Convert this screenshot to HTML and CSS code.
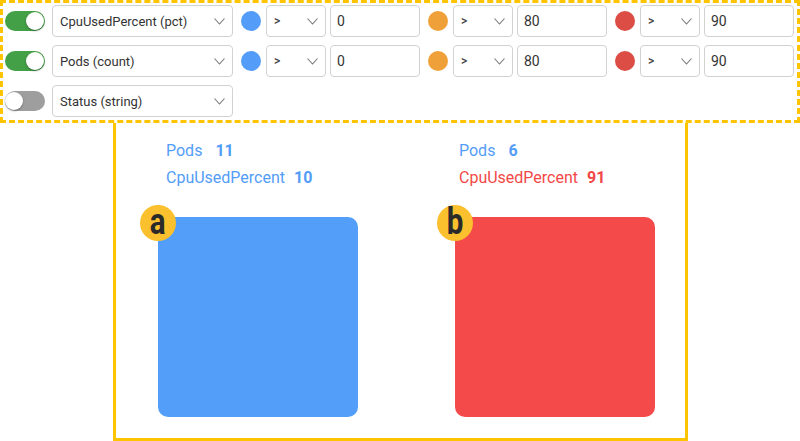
FILE: index.html
```html
<!DOCTYPE html>
<html>
<head>
<meta charset="utf-8">
<link rel="stylesheet" href="styles.css">
</head>
<body>
<div class="controls">
  <div class="row">
    <span class="toggle on"><span class="knob"></span></span>
    <div class="select metric"><span>CpuUsedPercent (pct)</span><svg class="chev" width="11" height="7" viewBox="0 0 11 7"><polyline points="0.5,0.5 5.5,6 10.5,0.5"/></svg></div>
    <div class="thr"><span class="dot blue"></span><div class="select op"><span class="gt">&gt;</span><svg class="chev" width="11" height="7" viewBox="0 0 11 7"><polyline points="0.5,0.5 5.5,6 10.5,0.5"/></svg></div><div class="input">0</div></div>
    <div class="thr"><span class="dot orange"></span><div class="select op"><span class="gt">&gt;</span><svg class="chev" width="11" height="7" viewBox="0 0 11 7"><polyline points="0.5,0.5 5.5,6 10.5,0.5"/></svg></div><div class="input">80</div></div>
    <div class="thr"><span class="dot red"></span><div class="select op"><span class="gt">&gt;</span><svg class="chev" width="11" height="7" viewBox="0 0 11 7"><polyline points="0.5,0.5 5.5,6 10.5,0.5"/></svg></div><div class="input">90</div></div>
  </div>
  <div class="row">
    <span class="toggle on"><span class="knob"></span></span>
    <div class="select metric"><span>Pods (count)</span><svg class="chev" width="11" height="7" viewBox="0 0 11 7"><polyline points="0.5,0.5 5.5,6 10.5,0.5"/></svg></div>
    <div class="thr"><span class="dot blue"></span><div class="select op"><span class="gt">&gt;</span><svg class="chev" width="11" height="7" viewBox="0 0 11 7"><polyline points="0.5,0.5 5.5,6 10.5,0.5"/></svg></div><div class="input">0</div></div>
    <div class="thr"><span class="dot orange"></span><div class="select op"><span class="gt">&gt;</span><svg class="chev" width="11" height="7" viewBox="0 0 11 7"><polyline points="0.5,0.5 5.5,6 10.5,0.5"/></svg></div><div class="input">80</div></div>
    <div class="thr"><span class="dot red"></span><div class="select op"><span class="gt">&gt;</span><svg class="chev" width="11" height="7" viewBox="0 0 11 7"><polyline points="0.5,0.5 5.5,6 10.5,0.5"/></svg></div><div class="input">90</div></div>
  </div>
  <div class="row">
    <span class="toggle off"><span class="knob"></span></span>
    <div class="select metric"><span>Status (string)</span><svg class="chev" width="11" height="7" viewBox="0 0 11 7"><polyline points="0.5,0.5 5.5,6 10.5,0.5"/></svg></div>
  </div>
</div>
<div class="preview">
  <div class="col col-a">
    <div class="stats">
      <div class="line blue-t"><span class="k">Pods</span><b class="v pods">11</b></div>
      <div class="line blue-t"><span class="k">CpuUsedPercent</span><b class="v">10</b></div>
    </div>
    <div class="tile tile-blue"><span class="badge"><span class="letter">a</span></span></div>
  </div>
  <div class="col col-b">
    <div class="stats">
      <div class="line blue-t"><span class="k">Pods</span><b class="v pods">6</b></div>
      <div class="line red-t"><span class="k">CpuUsedPercent</span><b class="v">91</b></div>
    </div>
    <div class="tile tile-red"><span class="badge"><span class="letter">b</span></span></div>
  </div>
</div>
</body>
</html>
```
FILE: styles.css
```css
* { box-sizing: border-box; }
html, body { margin: 0; padding: 0; background: #fff; }
body { font-family: Roboto, "Liberation Sans", sans-serif; width: 800px; height: 441px; overflow: hidden; }

.controls {
  width: 800px;
  height: 123px;
  border: 3px dashed #FFC400;
  padding: 2px 3px 2px 2px;
  display: flex;
  flex-direction: column;
  gap: 8px;
}
.row { display: flex; align-items: center; height: 32px; }

.toggle {
  position: relative;
  width: 40px;
  height: 20px;
  border-radius: 10px;
  margin-right: 7px;
  flex: none;
}
.toggle.on { background: #43A047; }
.toggle.off { background: #9E9E9E; }
.knob {
  position: absolute;
  top: 1px;
  width: 18px;
  height: 18px;
  border-radius: 50%;
  background: #fff;
  box-shadow: 0 1px 2px rgba(0,0,0,0.35);
}
.toggle.on .knob { right: 1px; }
.toggle.off .knob { left: 0; }

.select, .input {
  height: 32px;
  border: 1px solid #d2d2d2;
  border-radius: 4px;
  display: flex;
  align-items: center;
  color: #333;
  font-size: 13px;
  flex: none;
}
.select { justify-content: space-between; padding: 0 7px 0 7px; }
.metric { width: 181px; }
.op { width: 60px; margin-right: 4px; }
.input { width: 90px; padding-left: 6px; font-size: 14px; }
.gt { font-size: 12px; font-weight: 500; color: #444; }
.chev { flex: none; }
.chev polyline { fill: none; stroke: #777; stroke-width: 1.1; }

.thr { display: flex; align-items: center; margin-left: 8px; }
.dot { width: 20px; height: 20px; border-radius: 50%; margin-right: 5px; flex: none; }
.dot.blue { background: #539DF8; }
.dot.orange { background: #F0A038; }
.dot.red { background: #DC4D45; }

.preview {
  margin-left: 113px;
  width: 575px;
  height: 318px;
  border: 3px solid #FFC400;
  border-top: none;
  padding-top: 14px;
  display: flex;
}
.col { display: flex; flex-direction: column; }
.col-a { margin-left: 42px; }
.col-b { margin-left: 97px; }
.col-a .stats { padding-left: 8px; }
.col-b .stats { padding-left: 4px; }
.line { font-size: 16px; line-height: 27px; white-space: nowrap; }
.blue-t { color: #539DF8; }
.red-t { color: #F24848; }
.v { font-weight: bold; margin-left: 9px; }
.v.pods { margin-left: 13px; }

.tile {
  position: relative;
  width: 200px;
  height: 200px;
  border-radius: 10px;
  margin-top: 26px;
}
.tile-blue { background: #539EF9; }
.tile-red { background: #F44A4A; }
.badge {
  position: absolute;
  left: -18px;
  top: -12px;
  width: 36px;
  height: 36px;
  border-radius: 50%;
  background: #FBC02D;
  display: flex;
  align-items: center;
  justify-content: center;
}
.letter {
  display: block;
  color: #2a2a2a;
  font-weight: bold;
  font-size: 36px;
  line-height: 36px;
  margin-top: -2px;
  transform: scaleX(0.82);
}
```
